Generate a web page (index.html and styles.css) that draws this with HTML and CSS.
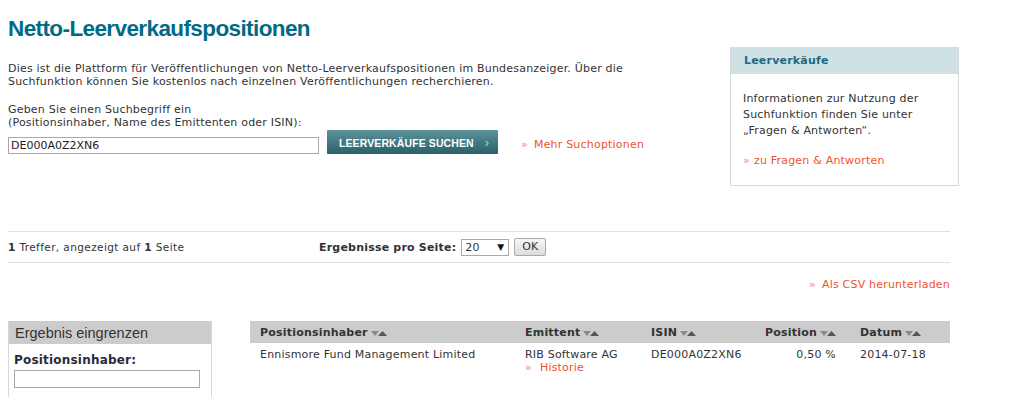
FILE: index.html
```html
<!DOCTYPE html>
<html lang="de">
<head>
    <meta charset="UTF-8">
    <title>Netto-Leerverkaufspositionen</title>
    <link rel="stylesheet" href="styles.css">
</head>
<body>
    <div class="page">
        <div class="top">
            <div class="main">
                <h1>Netto-Leerverkaufspositionen</h1>
                <p class="intro">Dies ist die Plattform für Veröffentlichungen von Netto-Leerverkaufspositionen im Bundesanzeiger. Über die Suchfunktion können Sie kostenlos nach einzelnen Veröffentlichungen recherchieren.</p>
                <form class="search">
                    <label for="q">Geben Sie einen Suchbegriff ein<br>(Positionsinhaber, Name des Emittenten oder ISIN):</label>
                    <div class="search-row">
                        <input type="text" id="q" value="DE000A0Z2XN6">
                        <button type="button" class="btn-search">LEERVERKÄUFE SUCHEN <span class="chev">›</span></button>
                        <a class="link" href="#">Mehr Suchoptionen</a>
                    </div>
                </form>
            </div>
            <div class="side">
                <div class="side-head">Leerverkäufe</div>
                <div class="side-body">
                    <p>Informationen zur Nutzung der Suchfunktion finden Sie unter „Fragen &amp; Antworten“.</p>
                    <a class="link small" href="#">zu Fragen &amp; Antworten</a>
                </div>
            </div>
        </div>

        <div class="pager">
            <div class="hits"><b>1</b> Treffer, angezeigt auf <b>1</b> Seite</div>
            <div class="per-page">
                <b>Ergebnisse pro Seite:</b>
                <span class="select">20 <span class="arrow">▼</span></span>
                <span class="ok">OK</span>
            </div>
        </div>
        <div class="csv"><a class="link" href="#">Als CSV herunterladen</a></div>

        <div class="bottom">
            <div class="filter">
                <div class="filter-head">Ergebnis eingrenzen</div>
                <div class="filter-body">
                    <label for="f1">Positionsinhaber:</label>
                    <input type="text" id="f1">
                </div>
            </div>
            <table class="results">
                <thead>
                    <tr>
                        <th class="c-holder">Positionsinhaber <svg class="sort" width="16" height="7" viewBox="0 0 16 7"><path d="M0 1h8l-4 5z" fill="#8a8a8a"/><path d="M7 6h9l-4.5-5z" fill="#555"/></svg></th>
                        <th class="c-issuer">Emittent <svg class="sort" width="16" height="7" viewBox="0 0 16 7"><path d="M0 1h8l-4 5z" fill="#8a8a8a"/><path d="M7 6h9l-4.5-5z" fill="#555"/></svg></th>
                        <th class="c-isin">ISIN <svg class="sort" width="16" height="7" viewBox="0 0 16 7"><path d="M0 1h8l-4 5z" fill="#8a8a8a"/><path d="M7 6h9l-4.5-5z" fill="#555"/></svg></th>
                        <th class="c-pos">Position <svg class="sort" width="16" height="7" viewBox="0 0 16 7"><path d="M0 1h8l-4 5z" fill="#8a8a8a"/><path d="M7 6h9l-4.5-5z" fill="#555"/></svg></th>
                        <th class="c-date">Datum <svg class="sort" width="16" height="7" viewBox="0 0 16 7"><path d="M0 1h8l-4 5z" fill="#8a8a8a"/><path d="M7 6h9l-4.5-5z" fill="#555"/></svg></th>
                    </tr>
                </thead>
                <tbody>
                    <tr>
                        <td>Ennismore Fund Management Limited</td>
                        <td>RIB Software AG<br><a class="link" href="#">Historie</a></td>
                        <td>DE000A0Z2XN6</td>
                        <td class="num">0,50 %</td>
                        <td>2014-07-18</td>
                    </tr>
                </tbody>
            </table>
        </div>
    </div>
</body>
</html>
```

FILE: styles.css
```css
* {
    box-sizing: border-box;
    margin: 0;
    padding: 0;
}

body {
    font-family: 'DejaVu Sans', Verdana, sans-serif;
    font-size: 11px;
    line-height: 13px;
    letter-spacing: 0.2px;
    color: #333;
    background: #fff;
}

.page {
    width: 960px;
    padding: 0 0 0 8px;
}

.top {
    display: flex;
    justify-content: space-between;
}

.main {
    width: 660px;
}

h1 {
    font-family: 'Liberation Sans', Arial, sans-serif;
    font-size: 22.5px;
    line-height: 28px;
    font-weight: bold;
    letter-spacing: -0.6px;
    color: #006a85;
    padding-top: 15px;
}

.intro {
    margin-top: 19px;
    width: 640px;
}

.search {
    margin-top: 15px;
}

.search label {
    display: block;
}

.search-row {
    display: flex;
    align-items: center;
    margin-top: 1px;
}

.search-row input {
    width: 311px;
    height: 17px;
    border: 1px solid #a9a9a9;
    font: 11px 'DejaVu Sans', Verdana, sans-serif;
    padding: 0 2px;
    color: #222;
    margin-top: 7px;
}

.btn-search {
    margin-left: 8px;
    width: 171px;
    height: 24px;
    border: none;
    border-radius: 1px;
    background: linear-gradient(#5d9299, #2a6169);
    color: #fff;
    font-family: 'Liberation Sans', Arial, sans-serif;
    font-size: 10.5px;
    font-weight: bold;
    text-align: left;
    padding-left: 12px;
    letter-spacing: 0.1px;
}

.btn-search .chev {
    margin-left: 8px;
    color: #b7d0d3;
    font-weight: normal;
    font-size: 13px;
}

.link {
    color: #f0522c;
    text-decoration: none;
}

.link::before {
    content: "»";
    color: #f08a70;
    margin-right: 6px;
}

.search-row .link {
    margin-left: 23px;
    margin-top: 5px;
}

.side {
    width: 229px;
    margin-top: 47px;
    margin-right: 1px;
    border: 1px solid #d8d8d8;
    border-top: none;
    align-self: flex-start;
}

.side-head {
    background: #d0e1e6;
    color: #1d6a80;
    font-weight: bold;
    font-size: 11px;
    height: 27px;
    line-height: 28px;
    padding-left: 13px;
}

.side-body {
    padding: 17px 10px 16px 12px;
    line-height: 16px;
}

.side-body p {
    margin-bottom: 14px;
}

.side-body .link::before {
    margin-right: 4px;
}

.pager {
    display: flex;
    align-items: center;
    width: 942px;
    margin-top: 45px;
    height: 32px;
    border-top: 1px solid #e2e2e2;
    border-bottom: 1px solid #e2e2e2;
}

.hits {
    width: 311px;
    padding-top: 1px;
    font-size: 10.5px;
    letter-spacing: 0.4px;
}

.per-page {
    display: flex;
    align-items: center;
    font-size: 11px;
}

.per-page b {
    margin-right: 5px;
}

.select {
    display: inline-flex;
    justify-content: space-between;
    width: 48px;
    height: 17px;
    border: 1px solid #a9a9a9;
    padding: 1px 4px 0 3px;
    font-size: 11px;
}

.select .arrow {
    font-size: 9px;
    color: #111;
}

.ok {
    display: inline-block;
    margin-left: 5px;
    width: 32px;
    height: 18px;
    line-height: 16px;
    text-align: center;
    border: 1px solid #a9a9a9;
    border-radius: 2px;
    background: linear-gradient(#f6f6f6, #dcdcdc);
    font-size: 11px;
}

.csv {
    width: 942px;
    text-align: right;
    margin-top: 15px;
}

.bottom {
    display: flex;
    margin-top: 30px;
    width: 942px;
    justify-content: space-between;
}

.filter {
    width: 204px;
    border: 1px solid #d8d8d8;
    border-top: none;
}

.filter-head {
    background: #cccccc;
    font-family: 'Liberation Sans', Arial, sans-serif;
    font-size: 14.5px;
    letter-spacing: 0;
    color: #333;
    height: 23px;
    line-height: 24px;
    padding-left: 6px;
}

.filter-body {
    padding: 10px 10px 10px 5px;
}

.filter-body label {
    display: block;
    font-weight: bold;
    font-size: 12px;
    color: #2a2a3a;
}

.filter-body input {
    width: 186px;
    height: 18px;
    margin-top: 3px;
    border: 1px solid #a9a9a9;
}

.results {
    width: 700px;
    border-collapse: collapse;
    align-self: flex-start;
}

.results th {
    background: #cccccc;
    height: 22px;
    text-align: left;
    font-size: 11px;
    color: #333;
    padding: 1px 0 0 10px;
    white-space: nowrap;
}

.results td {
    vertical-align: top;
    padding: 5px 0 0 10px;
}

.results .sort {
    vertical-align: middle;
    margin-left: -1px;
}

.results .c-holder { width: 265px; }
.results .c-issuer { width: 126px; }
.results .c-isin { width: 109px; }
.results .c-pos { width: 100px; text-align: right; padding-right: 14px; }

.results .num {
    text-align: right;
    padding-right: 14px;
}

.results td .link::before {
    margin-right: 8px;
}
```
